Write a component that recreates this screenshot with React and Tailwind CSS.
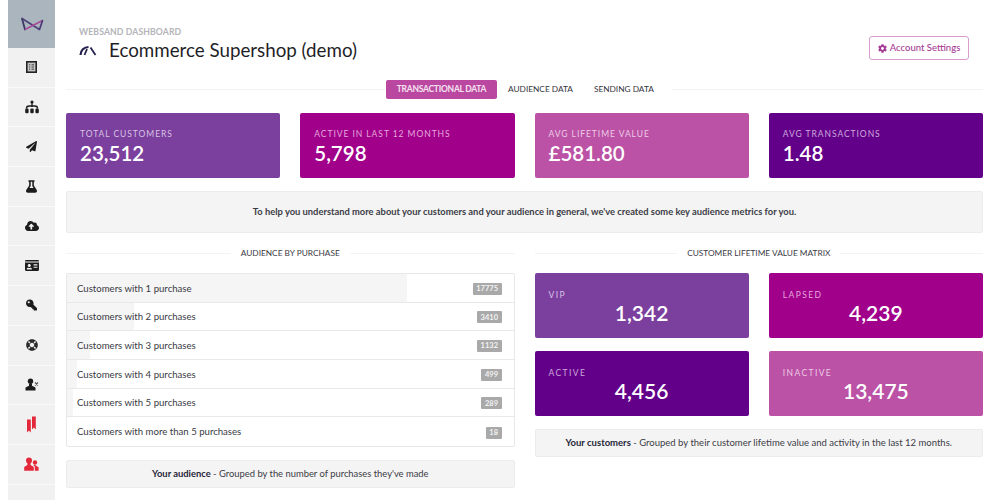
import React from "react";
import { FaPaperPlane, FaFlask, FaCloudUploadAlt, FaIdCard, FaKey, FaLifeRing, FaCog } from "react-icons/fa";

const Logo = () => (
  <svg width="24" height="14" viewBox="0 0 24 14" fill="none">
    <path d="M2 1.5 L5 12.5" stroke="#3c3768" strokeWidth="1.8" strokeLinecap="round" />
    <path d="M2 1.5 L19.5 12.5" stroke="#4b3f78" strokeWidth="1.5" />
    <path d="M5 12.5 L22.5 3.5" stroke="#a84a98" strokeWidth="1.5" />
    <path d="M22.5 3.5 L19.5 12.5" stroke="#4a3a78" strokeWidth="1.7" strokeLinecap="round" />
  </svg>
);

const Ledger = () => (
  <svg width="11" height="12" viewBox="0 0 11 12">
    <rect x="0.8" y="0.8" width="9.4" height="10.4" fill="#c4c4c4" stroke="#222" strokeWidth="1.6" />
    <path d="M3 3.8h1.2M5.5 3.8h2.5M3 6h1.2M5.5 6h2.5M3 8.2h1.2M5.5 8.2h2.5" stroke="#333" strokeWidth="0.9" />
  </svg>
);

const Hierarchy = () => (
  <svg width="14" height="14" viewBox="0 0 14 14" fill="#1c1c1c">
    <circle cx="7" cy="2" r="1.6" />
    <rect x="6.3" y="3" width="1.4" height="4" />
    <path d="M1.5 8.5 Q1.5 6 4 6 H10 Q12.5 6 12.5 8.5" fill="none" stroke="#1c1c1c" strokeWidth="1.4" />
    <rect x="0.2" y="8.5" width="3.4" height="4.8" rx="1.2" />
    <rect x="5.3" y="8.5" width="3.4" height="4.8" rx="1.2" />
    <rect x="10.4" y="8.5" width="3.4" height="4.8" rx="1.2" />
  </svg>
);

const UserX = () => (
  <svg width="14" height="14" viewBox="0 0 14 14" fill="#1c1c1c">
    <circle cx="5.5" cy="3.2" r="2.7" />
    <path d="M4 5.5h3v2.2l3.5 1.8v3H0.5v-3L4 7.7z" />
    <path d="M10 4.5l3 3M13 4.5l-3 3" stroke="#555" strokeWidth="1.1" />
  </svg>
);

const Bookmarks = () => (
  <svg width="9" height="17" viewBox="0 0 9 17" fill="#e3283a">
    <path d="M0 3.5h3.8v13l-1.9-2-1.9 2z" />
    <path d="M5 0.5h3.8v13l-1.9-2-1.9 2z" />
  </svg>
);

const People = () => (
  <svg width="15" height="15" viewBox="0 0 15 15" fill="#e3283a">
    <circle cx="5" cy="3.4" r="3" />
    <path d="M3.4 6h3.2v2l3.2 2v3.8H0.2V10l3.2-2z" />
    <circle cx="11" cy="5.4" r="2.2" />
    <path d="M10.6 7.5h1v1l3 1.7v3.6h-3.8v-4.2l-1.4-1z" />
  </svg>
);

const Gauge = () => (
  <svg width="18" height="11" viewBox="0 0 18 11" fill="none">
    <path d="M1.5 10 A8 8 0 0 1 9.5 2" stroke="#26224f" strokeWidth="2.2" />
    <path d="M11.5 2.5 L16.5 10" stroke="#26224f" strokeWidth="1.8" />
    <path d="M5.5 10 L8 4" stroke="#26224f" strokeWidth="1.8" />
  </svg>
);

const navIcons = [
  { el: <Ledger /> },
  { el: <Hierarchy /> },
  { el: <FaPaperPlane className="w-[11px] h-[11px]" /> },
  { el: <FaFlask className="w-[11px] h-[13px]" /> },
  { el: <FaCloudUploadAlt className="w-[14px] h-[14px]" /> },
  { el: <FaIdCard className="w-[14px] h-[13px]" /> },
  { el: <FaKey className="w-[11px] h-[12px] -scale-x-100" /> },
  { el: <FaLifeRing className="w-[12px] h-[12px] text-[#2a2a2a]" /> },
  { el: <UserX /> },
  { el: <Bookmarks /> },
  { el: <People /> },
];

const topCards = [
  { label: "TOTAL CUSTOMERS", value: "23,512", bg: "bg-[#7b3f9e]", tone: "text-[#d8c3e4]" },
  { label: "ACTIVE IN LAST 12 MONTHS", value: "5,798", bg: "bg-[#a0008a]", tone: "text-[#e6a8dc]" },
  { label: "AVG LIFETIME VALUE", value: "£581.80", bg: "bg-[#bb52a5]", tone: "text-[#edcbe6]" },
  { label: "AVG TRANSACTIONS", value: "1.48", bg: "bg-[#63008a]", tone: "text-[#cda8dc]" },
];

const matrix = [
  { label: "VIP", value: "1,342", bg: "bg-[#7b3f9e]", tone: "text-[#d8c3e4]" },
  { label: "LAPSED", value: "4,239", bg: "bg-[#a0008a]", tone: "text-[#e6a8dc]" },
  { label: "ACTIVE", value: "4,456", bg: "bg-[#63008a]", tone: "text-[#cda8dc]" },
  { label: "INACTIVE", value: "13,475", bg: "bg-[#bb52a5]", tone: "text-[#edcbe6]" },
];

const rows = [
  { label: "Customers with 1 purchase", n: "17775", w: 340 },
  { label: "Customers with 2 purchases", n: "3410", w: 67 },
  { label: "Customers with 3 purchases", n: "1132", w: 23 },
  { label: "Customers with 4 purchases", n: "499", w: 10 },
  { label: "Customers with 5 purchases", n: "289", w: 6 },
  { label: "Customers with more than 5 purchases", n: "18", w: 0 },
];

const SectionTitle = ({ children }) => (
  <div className="flex items-center gap-[10px] h-[14px]">
    <div className="flex-1 h-px bg-[#f3f3f3]" />
    <span className="text-[8.3px] text-[#3a3a44] whitespace-nowrap">{children}</span>
    <div className="flex-1 h-px bg-[#f3f3f3]" />
  </div>
);

const Note = ({ children, className = "" }) => (
  <div className={`flex items-center justify-center rounded-[2px] border border-[#ececec] bg-[#f4f4f4] text-[#3c3c46] ${className}`}>
    {children}
  </div>
);

export default function App() {
  return (
    <div className="flex w-[1000px] h-[500px] overflow-hidden bg-white [font-family:Lato,'Open_Sans',sans-serif]">
      <aside className="ml-2 w-[47px] h-full shrink-0 flex flex-col bg-[#f1f1f1]">
        <div className="h-[48px] pb-[1px] shrink-0 flex items-center justify-center bg-[#abb5bd]">
          <Logo />
        </div>
        {navIcons.map((it, i) => (
          <div
            key={i}
            className="h-[39.7px] shrink-0 flex items-center justify-center border-b border-[#fafafa] text-[#1c1c1c]"
          >
            {it.el}
          </div>
        ))}
      </aside>

      <main className="flex-1 min-w-0 pl-[11px] pr-[17px]">
        <header className="flex items-start justify-between h-[80px]">
          <div className="pl-[13px] pt-[26px]">
            <div className="text-[8.7px] leading-[11px] font-bold tracking-[0.1px] text-[#b4b4b8]">WEBSAND DASHBOARD</div>
            <div className="flex items-center gap-[12px] mt-[1px]">
              <Gauge />
              <h1 className="text-[18.75px] leading-[24px] text-[#1f1f28]">Ecommerce Supershop (demo)</h1>
            </div>
          </div>
          <button className="mt-[36px] mr-[14px] w-[100px] h-[24px] flex items-center justify-center gap-[3px] rounded-[3px] border border-[#d99ccf] text-[9.5px] font-medium text-[#a53b95]">
            <FaCog className="w-[9px] h-[9px]" />
            Account Settings
          </button>
        </header>

        <nav className="flex items-center h-[19px]">
          <div className="w-[320px] h-px bg-[#f3f3f3]" />
          <span className="h-[19px] w-[111px] flex items-center justify-center rounded-[2px] bg-[#bb48a0] text-[8.5px] font-bold tracking-[-0.25px] text-[#f6e3f2]">TRANSACTIONAL DATA</span>
          <span className="ml-[11px] text-[8.3px] text-[#33333c]">AUDIENCE DATA</span>
          <span className="ml-[21px] text-[8.3px] text-[#33333c]">SENDING DATA</span>
          <div className="flex-1 ml-[18px] h-px bg-[#f3f3f3]" />
        </nav>

        <section className="grid grid-cols-4 gap-[20px] mt-[14px]">
          {topCards.map((c) => (
            <div key={c.label} className={`h-[65px] rounded-[2px] pl-[14px] pt-[16px] ${c.bg}`}>
              <div className={`text-[8.5px] leading-[11px] tracking-[0.95px] ${c.tone}`}>{c.label}</div>
              <div className="text-[20.5px] leading-[24px] mt-[1px] font-semibold text-white">{c.value}</div>
            </div>
          ))}
        </section>

        <Note className="mt-[13px] h-[42px] text-[9.35px] font-bold text-[#2a2a3a]">
          To help you understand more about your customers and your audience in general, we've created some key audience metrics for you.
        </Note>

        <section className="grid grid-cols-2 gap-[20px] mt-[13px]">
          <div>
            <SectionTitle>AUDIENCE BY PURCHASE</SectionTitle>
            <div className="mt-[13px] rounded-[2px] border border-[#e8e8e8]">
              {rows.map((r, i) => (
                <div key={r.label} className={`relative h-[28.65px] pt-[2px] flex items-center justify-between pl-[10px] pr-[12px] ${i < 5 ? "border-b border-[#e8e8e8]" : ""}`}>
                  <div className="absolute left-0 top-0 bottom-0 bg-[#f5f5f5]" style={{ width: r.w }} />
                  <span className="relative text-[9.6px] text-[#3a3a44]">{r.label}</span>
                  <span className="relative h-[12px] flex items-center rounded-[1px] bg-[#a9a9a9] px-[3.5px] text-[7.5px] font-bold text-[#f2f2f2]">{r.n}</span>
                </div>
              ))}
            </div>
            <Note className="mt-[13px] h-[28px] text-[9.4px]">
              <b className="font-bold text-[#26263a]">Your audience</b>&nbsp;- Grouped by the number of purchases they've made
            </Note>
          </div>

          <div>
            <SectionTitle>CUSTOMER LIFETIME VALUE MATRIX</SectionTitle>
            <div className="grid grid-cols-2 gap-x-[20px] gap-y-[13px] mt-[13px]">
              {matrix.map((c) => (
                <div key={c.label} className={`h-[65px] rounded-[2px] px-[14px] pt-[17px] ${c.bg}`}>
                  <div className={`text-[8.5px] leading-[11px] tracking-[1.4px] ${c.tone}`}>{c.label}</div>
                  <div className="text-center text-[21px] leading-[24px] font-semibold text-white">{c.value}</div>
                </div>
              ))}
            </div>
            <Note className="mt-[13px] h-[28px] text-[9.5px]">
              <b className="font-bold text-[#26263a]">Your customers</b>&nbsp;- Grouped by their customer lifetime value and activity in the last 12 months.
            </Note>
          </div>
        </section>
      </main>
    </div>
  );
}
